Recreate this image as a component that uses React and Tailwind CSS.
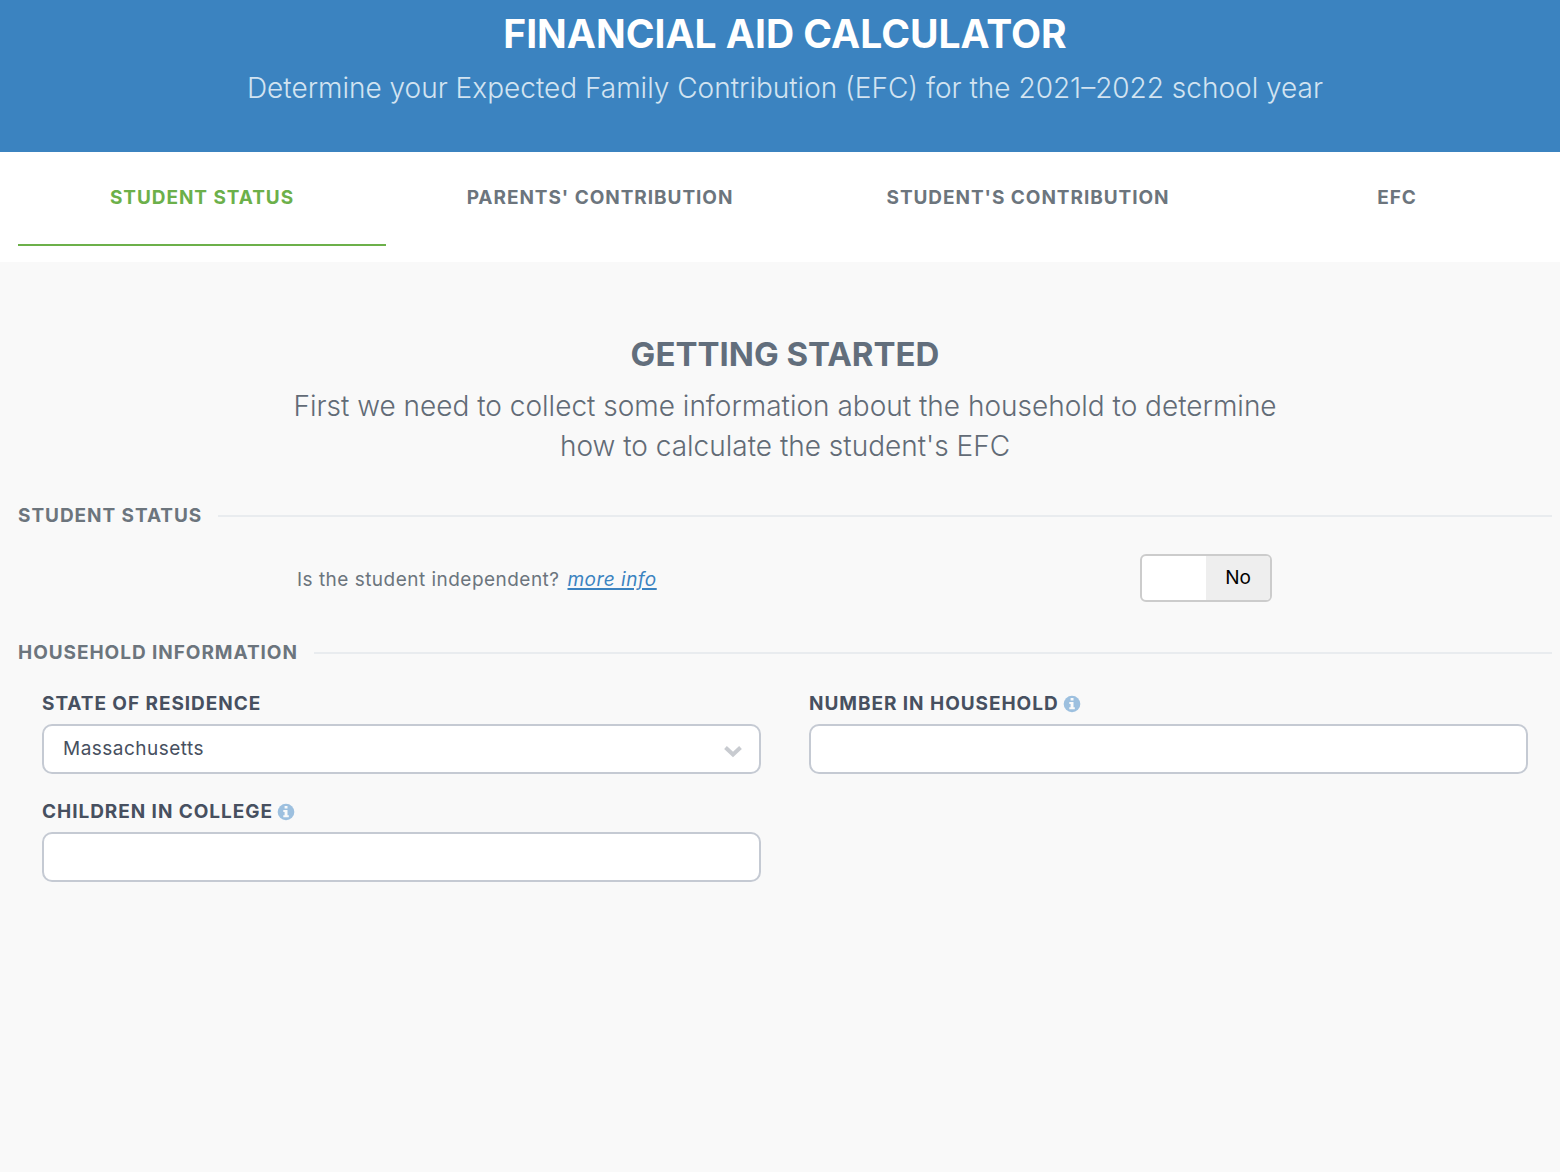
import React from "react";

const tabs = [
  { label: "Student Status", active: true },
  { label: "Parents' Contribution" },
  { label: "Student's Contribution" },
  { label: "EFC" },
];

function InfoIcon() {
  return (
    <svg viewBox="0 0 18 18" className="h-[18px] w-[18px] shrink-0" aria-hidden="true">
      <circle cx="9" cy="9" r="8.3" fill="#9dc0df" />
      <path d="M7.6 3h2.9v2.6H7.6zM6.3 7h4.2v5.2h1.3v2H6.3v-2h1.3V9H6.3z" fill="#fafafa" />
    </svg>
  );
}

function Legend({ children }) {
  return (
    <h3 className="flex items-center gap-4 text-[19px] leading-6 font-bold tracking-wider text-[#6c757d] uppercase">
      {children}
      <span className="h-0.5 flex-1 bg-[#e9ecef]" />
    </h3>
  );
}

function Field({ id, label, info, children }) {
  return (
    <div className="min-w-0">
      <label htmlFor={id} className="flex h-6 items-center gap-1 text-[19px] leading-6 font-bold tracking-wider text-[#475060] uppercase">
        {label}
        {info && <InfoIcon />}
      </label>
      <div className="relative mt-2">{children}</div>
    </div>
  );
}

const control =
  "block h-[50px] w-full appearance-none rounded-[10px] border-2 border-[#c5cad3] bg-white px-[19px] text-[19px] tracking-wide text-[#475060] outline-none";

export default function App() {
  return (
    <div className="min-h-screen bg-[#f9f9f9] font-['Inter','Liberation_Sans',sans-serif]">
      <header className="bg-[#3b83c0] pt-2 pb-11 pl-[10px] text-center">
        <h1 className="text-[39px] leading-[52px] font-bold text-white uppercase">Financial Aid Calculator</h1>
        <p className="mt-2 text-[28px] leading-10 font-light text-[#d2e3f1]">
          Determine your Expected Family Contribution (EFC) for the 2021–2022 school year
        </p>
      </header>
      <nav className="grid grid-cols-[368fr_428fr_428fr_310fr] bg-white pr-2 pb-4 pl-[18px]">
        {tabs.map((t) => (
          <button
            key={t.label}
            type="button"
            className={
              t.active
                ? "h-[94px] border-b-2 border-[#6cb04a] text-[19px] font-bold tracking-wider text-[#6cb04a] uppercase"
                : "h-[94px] border-b-2 border-transparent text-[19px] font-bold tracking-wider text-[#6c757d] uppercase"
            }
          >
            {t.label}
          </button>
        ))}
      </nav>
      <main className="pt-[68px] pr-2 pl-[18px]">
        <h2 className="text-center text-[33px] leading-[48px] font-bold text-[#626e7c] uppercase">Getting Started</h2>
        <p className="mx-auto mt-2 max-w-5xl text-center text-[28px] leading-10 font-light text-[#626b76]">
          First we need to collect some information about the household to determine how to calculate the student's EFC
        </p>
        <section className="mt-[38px]">
          <Legend>Student Status</Legend>
          <div className="mt-[26px] flex h-12 items-center justify-between pr-[280px] pl-[279px]">
            <p className="flex gap-2 pt-1 text-[19px] tracking-wide text-[#6c757d]">
              Is the student independent?
              <a href="#info" className="text-[#3b83c0] italic underline decoration-2 underline-offset-2">more info</a>
            </p>
            <button
              type="button"
              role="switch"
              aria-checked="false"
              aria-label="Is the student independent?"
              className="grid h-12 w-[132px] grid-cols-2 overflow-hidden rounded-md border-2 border-[#cccccc] bg-white text-[19px] text-black"
            >
              <span />
              <span className="flex h-full items-center justify-center bg-[#eeeeee]">No</span>
            </button>
          </div>
        </section>
        <section className="mt-[39px]">
          <Legend>Household Information</Legend>
          <div className="mt-[27px] grid grid-cols-2 gap-x-12 gap-y-[26px] px-6">
            <Field id="state" label="State of Residence">
              <select id="state" className={control} defaultValue="Massachusetts">
                <option>Massachusetts</option>
              </select>
              <svg viewBox="0 0 20 14" className="pointer-events-none absolute top-5 right-[18px] h-[14px] w-5" aria-hidden="true">
                <path d="M2.5 3.5 10 10.5l7.5-7" fill="none" stroke="#c8cbd0" strokeWidth="4" />
              </svg>
            </Field>
            <Field id="household" label="Number in Household" info>
              <input id="household" className={control} />
            </Field>
            <Field id="college" label="Children in College" info>
              <input id="college" className={control} />
            </Field>
          </div>
        </section>
      </main>
    </div>
  );
}
